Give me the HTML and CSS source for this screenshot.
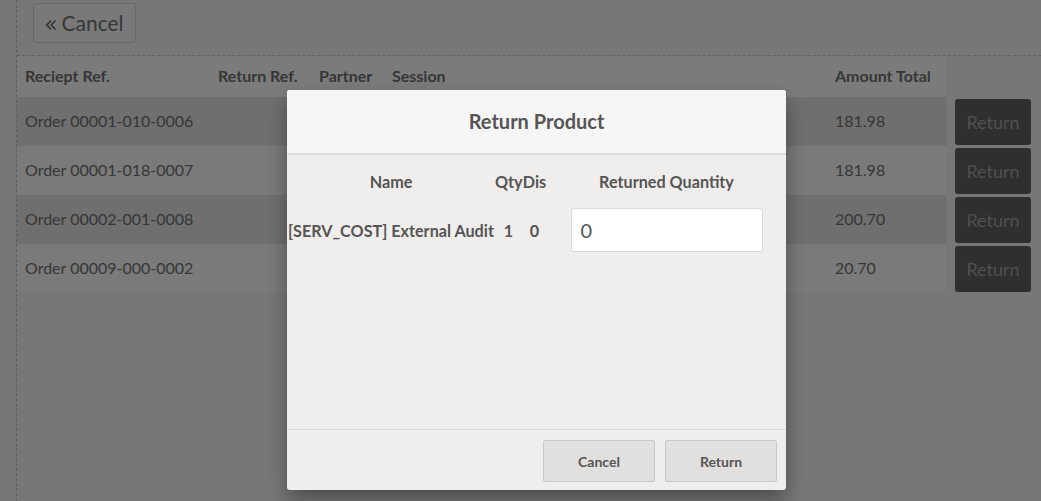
FILE: index.html
```html
<!DOCTYPE html>
<html>
<head>
<meta charset="utf-8">
<link rel="stylesheet" href="styles.css">
</head>
<body>
<div class="screen">
  <div class="topbar">
    <button class="back-btn"><svg class="chev" width="12" height="12" viewBox="0 0 12 12"><path d="M6 1.5 L1.8 6 L6 10.5 M10.5 1.5 L6.3 6 L10.5 10.5" fill="none" stroke="#363636" stroke-width="1.7"/></svg><span>Cancel</span></button>
  </div>
  <table class="orders">
    <thead>
      <tr>
        <th class="c1">Reciept Ref.</th>
        <th class="c2">Return Ref.</th>
        <th class="c3">Partner</th>
        <th class="c4">Session</th>
        <th class="c5">Amount Total</th>
        <th class="c6"></th>
      </tr>
    </thead>
    <tbody>
      <tr class="odd"><td>Order 00001-010-0006</td><td></td><td></td><td class="sess">(1)</td><td>181.98</td><td class="act"><button class="ret">Return</button></td></tr>
      <tr class="even"><td>Order 00001-018-0007</td><td></td><td></td><td class="sess">(1)</td><td>181.98</td><td class="act"><button class="ret">Return</button></td></tr>
      <tr class="odd"><td>Order 00002-001-0008</td><td></td><td></td><td class="sess"></td><td>200.70</td><td class="act"><button class="ret">Return</button></td></tr>
      <tr class="even"><td>Order 00009-000-0002</td><td></td><td></td><td class="sess">(1)</td><td>20.70</td><td class="act"><button class="ret">Return</button></td></tr>
    </tbody>
  </table>
</div>

<div class="modal">
  <header class="modal-head">Return Product</header>
  <div class="modal-body">
    <table class="lines">
      <colgroup><col class="w1"><col class="w2"><col class="w3"><col class="w4"></colgroup>
      <thead>
        <tr><th>Name</th><th>Qty</th><th>Dis</th><th>Returned Quantity</th></tr>
      </thead>
      <tbody>
        <tr><td>[SERV_COST] External Audit</td><td>1</td><td>0</td><td><input class="qty" value="0"></td></tr>
      </tbody>
    </table>
  </div>
  <footer class="modal-foot">
    <button class="fbtn">Cancel</button>
    <button class="fbtn">Return</button>
  </footer>
</div>
</body>
</html>
```
FILE: styles.css
```css
html, body {
  margin: 0;
  padding: 0;
  height: 100%;
  background: #777777;
  font-family: Lato, "Open Sans", sans-serif;
  color: #363636;
  overflow: hidden;
}
.screen {
  margin-left: 16px;
  height: 100%;
  border-left: 1px dashed #5e5e5e;
}
.topbar {
  height: 56px;
  border-bottom: 1px dashed #626262;
  padding: 3px 0 0 16px;
  box-sizing: border-box;
}
.back-btn {
  width: 103px;
  height: 40px;
  background: #797979;
  border: 1px solid #686868;
  border-radius: 3px;
  font-family: Lato, sans-serif;
  font-size: 21px;
  color: #363636;
  padding: 0 0 2px 0;
  display: flex;
  align-items: center;
  justify-content: center;
  gap: 4px;
}
.chev { margin-top: 5px; flex: none; }
.orders {
  border-collapse: collapse;
  table-layout: fixed;
  width: 1024px;
  font-size: 16px;
}
.orders th {
  text-align: left;
  font-weight: bold;
  height: 39px;
  padding: 0 0 2px 8px;
  background: #7b7b7b;
  color: #363636;
}
.orders th.c6 { background: transparent; padding-left: 9px; }
.c1 { width: 185px; }
.c2 { width: 93px; }
.c3 { width: 65px; }
.c4 { width: 435px; }
.c5 { width: 111px; }
.c6 { width: 86px; }
.orders td {
  height: 47px;
  padding: 0 0 2px 8px;
  white-space: nowrap;
}
.orders td.sess { text-align: right; padding-right: 48px; }
.orders tr.odd td { background: #6f6f6f; }
.orders tr.even td { background: #7a7a7a; }
.orders tr td.act { background: #777777; padding: 2px 0 0 9px; vertical-align: top; height: 47px; }
.ret {
  width: 76px;
  height: 46px;
  border: none;
  border-radius: 3px;
  background: #2f2f2f;
  color: #505050;
  font-family: Lato, sans-serif;
  font-size: 18px;
  display: block;
}
.modal {
  position: absolute;
  left: 287px;
  top: 90px;
  width: 499px;
  height: 400px;
  background: #f0eeec;
  border-radius: 3px;
  box-shadow: 0 10px 20px rgba(0,0,0,0.35);
  display: flex;
  flex-direction: column;
  color: #555555;
}
.modal-head {
  height: 63px;
  line-height: 63px;
  text-align: center;
  font-size: 20px;
  font-weight: bold;
  background: #f7f6f6;
  border-bottom: 2px solid #dcdcdc;
  border-radius: 3px 3px 0 0;
  flex: none;
}
.modal-body {
  flex: 1;
  padding-top: 6px;
}
.lines {
  width: 100%;
  border-collapse: collapse;
  table-layout: fixed;
  font-size: 16.2px;
  font-weight: bold;
}
.w1 { width: 208px; }
.w2 { width: 27px; }
.w3 { width: 25px; }
.lines th {
  height: 40px;
  padding: 0;
  text-align: center;
  white-space: nowrap;
}
.lines td {
  text-align: center;
  padding: 7px 0 0 0;
  white-space: nowrap;
}
.qty {
  width: 192px;
  height: 44px;
  box-sizing: border-box;
  border: 1px solid #d9d9d9;
  border-radius: 3px;
  background: #fff;
  font-family: Lato, sans-serif;
  font-size: 20px;
  color: #555;
  padding: 0 9px;
  display: block;
  margin: 0 auto;
}
.modal-foot {
  flex: none;
  height: 61px;
  border-top: 1px solid #dcdad8;
  display: flex;
  justify-content: flex-end;
  align-items: flex-start;
  gap: 10px;
  padding: 10px 9px 0 0;
  box-sizing: border-box;
}
.fbtn {
  width: 112px;
  height: 42px;
  background: #e2e0de;
  border: 1px solid #cbc9c7;
  border-radius: 2px;
  font-family: Lato, sans-serif;
  font-size: 14px;
  font-weight: bold;
  color: #555;
}
```
